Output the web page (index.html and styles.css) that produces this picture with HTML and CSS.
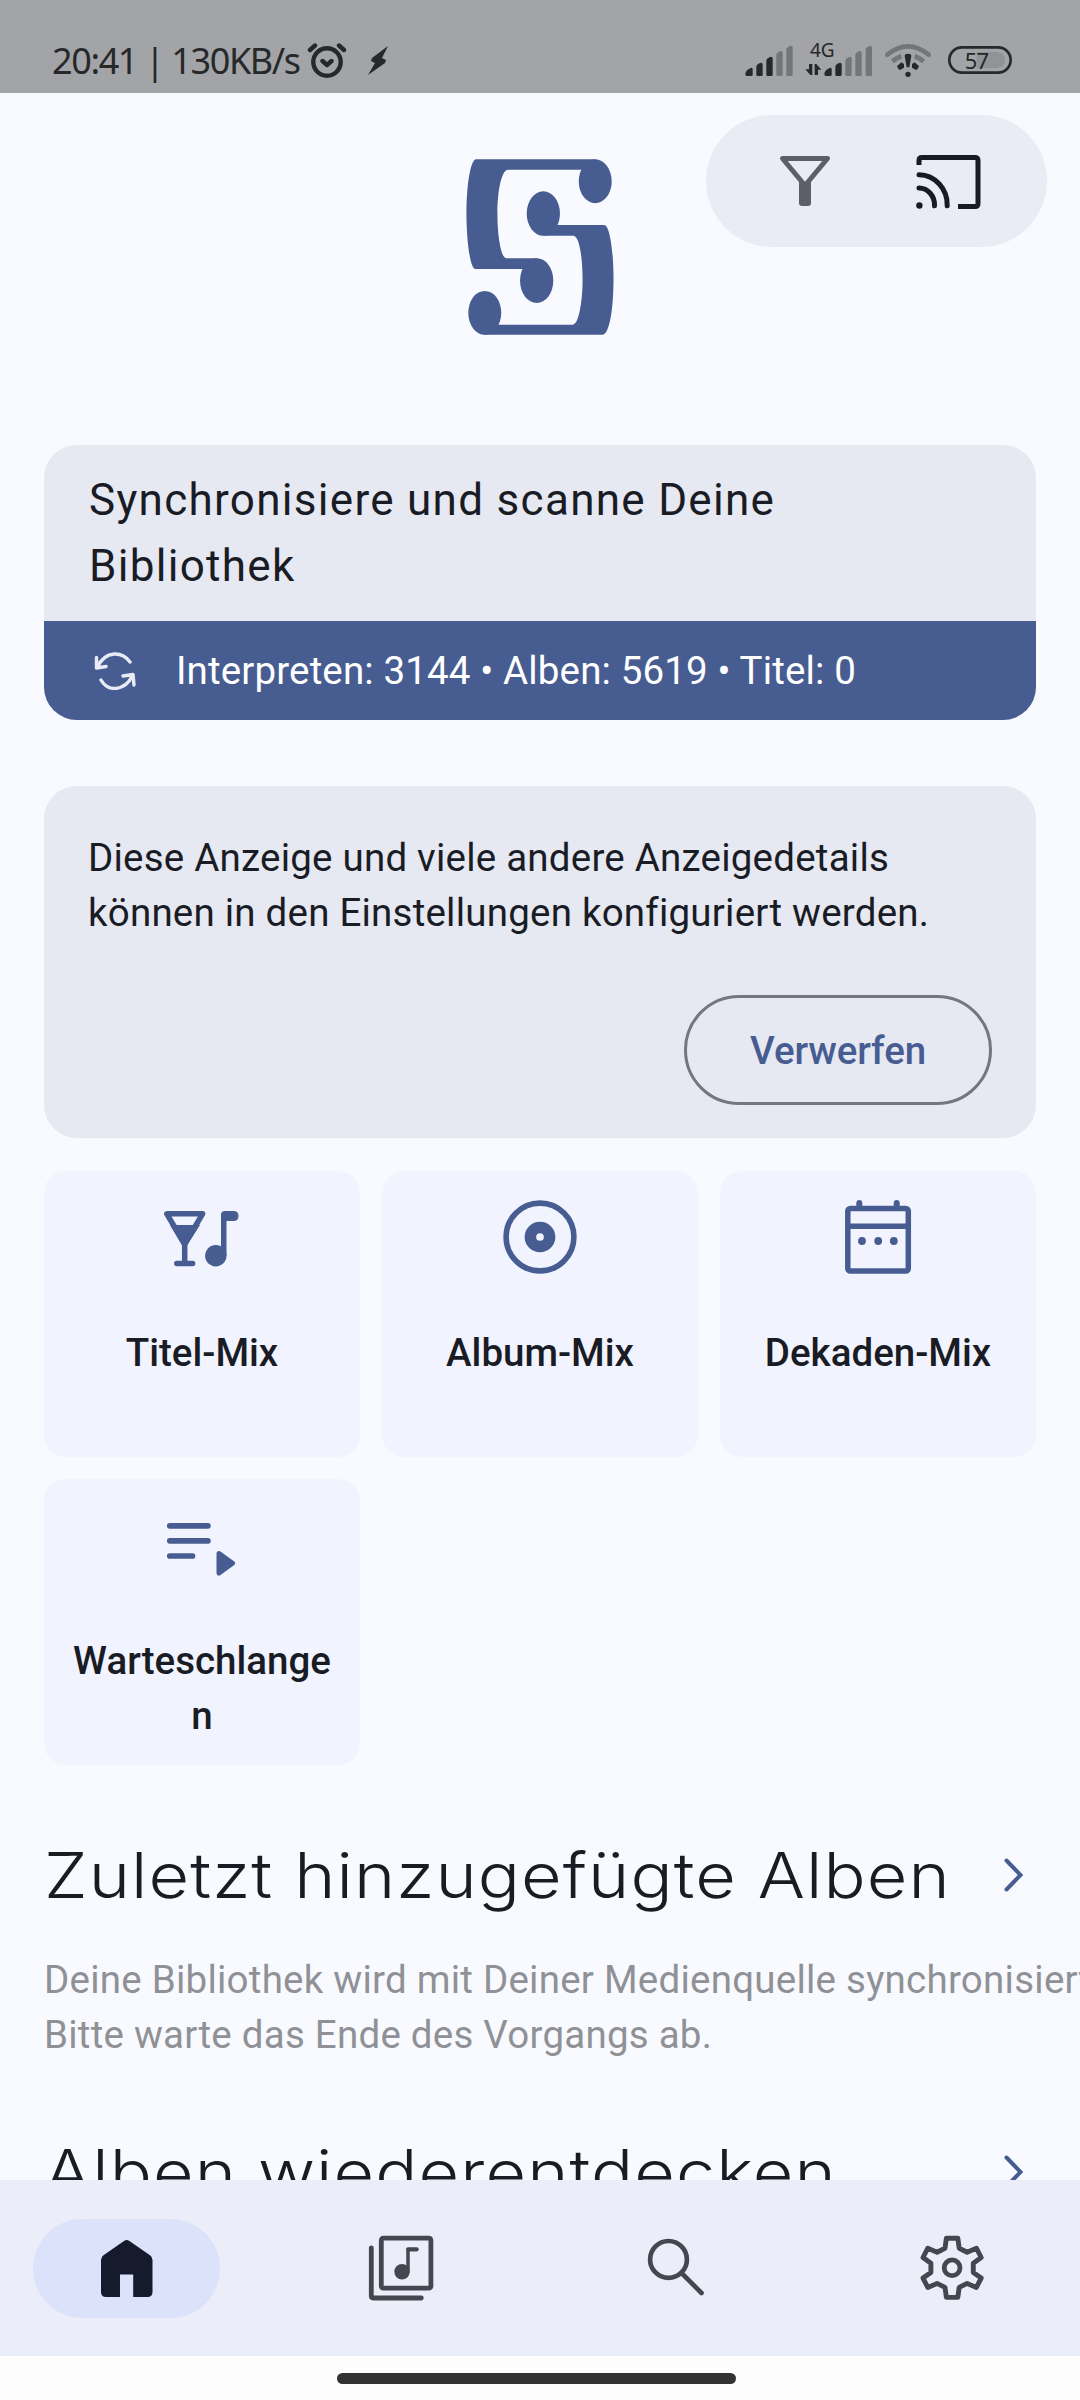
FILE: index.html
```html
<!DOCTYPE html>
<html lang="de">
<head>
<meta charset="utf-8">
<title>Startseite</title>
<link rel="stylesheet" href="styles.css">
</head>
<body>
<div class="screen">
  <div class="status-bar">
    <div class="status-left">
      <span class="status-text">20:41 | 130KB/s</span>
      <svg class="alarm" viewBox="0 0 40 36" fill="none" stroke="#262829" stroke-width="4.4" stroke-linecap="round" stroke-linejoin="round">
        <circle cx="20" cy="20" r="13.7"/><path d="M15.5 19l4.500 4 4.500-4M3 8l5-4.500M37 8l-5-4.500"/>
      </svg>
      <svg class="bolt" viewBox="0 0 20 29"><path fill="#262829" d="M20 0L4 12l-1 3 4 2L0 29l17-12 1-3-4-2z"/></svg>
    </div>
    <svg class="status-right" viewBox="0 0 1140 279">
      <g fill="#262829">
        <path d="M136 222q0-12 18-19q4 0 4 4v17q0 4-4 4h-14q-4 0-4-6zM169 200q0-8 14-12q5 0 5 5v31q0 4-4 4h-11q-4 0-4-4zM199 182q0-8 14-12q5 0 5 5v49q0 4-4 4h-11q-4 0-4-4z"/>
        <path d="M373 222q0-12 18-19q4 0 4 4v17q0 4-4 4h-14q-4 0-4-6zM406 200q0-8 14-12q5 0 5 5v31q0 4-4 4h-11q-4 0-4-4z"/>
        <path d="M327 192h10v33h-6l-15-17h11zM344 192h5l15 17h-10v16h-10z"/>
        <path d="M614 168q0-7 10-7t10 7l-6 34h-8z"/><circle cx="624" cy="223" r="8"/>
        <path d="M591 199l13-12 8 5v11l-12 7q-6-2-9-11zM657 199l-13-12-8 5v11l12 7q6-2 9-11z"/>
      </g>
      <g fill="#737579">
        <path d="M229 165q0-8 14-12q5 0 5 5v66q0 4-4 4h-11q-4 0-4-4zM259 149q0-8 14-12q5 0 5 5v82q0 4-4 4h-11q-4 0-4-4z"/>
        <path d="M436 182q0-8 14-12q5 0 5 5v49q0 4-4 4h-11q-4 0-4-4zM466 165q0-8 14-12q5 0 5 5v66q0 4-4 4h-11q-4 0-4-4zM497 149q0-8 14-12q5 0 5 5v82q0 4-4 4h-11q-4 0-4-4z"/>
      </g>
      <g fill="none" stroke="#737579" stroke-width="14">
        <path stroke-linecap="round" d="M562 164Q624 114 686 164"/><path d="M577 184q12-10 27-15M671 184q-12-10-27-15"/>
      </g>
      <path fill="#929397" d="M830 156h60q25 2 25 24t-25 24h-60z"/>
      <rect x="748" y="142" width="184" height="76" rx="38" fill="none" stroke="#262829" stroke-width="8"/>
      <text class="net-label" x="330" y="170">4G</text>
      <text class="battery-label" x="794" y="206">57</text>
    </svg>
  </div>

  <main class="content">
    <header class="hero">
      <svg class="logo" viewBox="78 86 444 529" fill="#475d92">
        <path d="M108 87H466V118H204C185 118 172 180 172 251C172 322 184 384 198 384H292V417H106C90 417 79 330 79 252C79 160 92 87 108 87Z"/>
        <path d="M310 284H493C509 284 521 360 521 445C521 540 508 614 488 614H133V584H399C415 584 428 520 428 450C428 380 418 317 400 317H310Z"/>
        <ellipse cx="466" cy="153" rx="49.500" ry="66"/><ellipse cx="290" cy="451.500" rx="50" ry="67.500"/>
        <ellipse cx="310" cy="250" rx="50" ry="67"/><ellipse cx="134" cy="548.500" rx="49.500" ry="66"/>
      </svg>
      <div class="toolbar">
        <svg class="tool-icon" viewBox="0 0 72 72" fill="none" stroke="#5c5f67" stroke-width="5" stroke-linejoin="round"><path d="M13.500 13.500h45L36 40.500z"/><path fill="#5c5f67" stroke="none" d="M30 37l6 2 6-2v21q0 3-3 3h-6q-3 0-3-3z"/></svg>
        <svg class="tool-icon" viewBox="0 0 72 72" fill="none" stroke="#161b26" stroke-width="5"><path d="M6 20v-4.500q0-3 3-3h53q3 0 3 3v43q0 3-3 3H45"/><path stroke-linecap="round" d="M6 29.800A28.500 30 0 0 1 34.200 60.800M6 43A15.500 17 0 0 1 21.500 60.800"/><circle cx="6.400" cy="60.500" r="3.200" fill="#161b26" stroke="none"/></svg>
      </div>
    </header>

    <section class="sync-card">
      <p class="sync-title">Synchronisiere und scanne Deine Bibliothek</p>
      <div class="sync-status">
        <svg class="sync-icon" viewBox="0 0 42 38" fill="none" stroke="#e8ebf5" stroke-width="3.400" stroke-linecap="round" stroke-linejoin="round"><path d="M2.500 5.500v10.500l9.500-1.500M3.500 15Q9 3 20 2Q30 1.500 36 10M40 33l-1-10.500-10 1.500M38.500 23.500Q33 35 22 36.500Q12 37 7 28"/></svg>
        <span>Interpreten: 3144 • Alben: 5619 • Titel: 0</span>
      </div>
    </section>

    <section class="hint-card">
      <p>Diese Anzeige und viele andere Anzeigedetails können in den Einstellungen konfiguriert werden.</p>
      <button class="dismiss" type="button">Verwerfen</button>
    </section>

    <section class="tiles">
      <div class="tile">
        <svg viewBox="0 0 88 88" fill="none" stroke="#475d92" stroke-width="5.500" stroke-linecap="round" stroke-linejoin="round"><path d="M8.800 20.800H44.600L26.700 51z"/><path d="M26.700 50V70.500M18.800 70.500H34.600"/><path fill="#475d92" stroke="none" d="M12 32H42L28 54h-3zM63 60V22q0-4 4-4h8.500q5 0 5 5t-5 5h-7V63z"/><circle cx="57.800" cy="62.700" r="10.700" fill="#475d92" stroke="none"/></svg>
        <span>Titel-Mix</span>
      </div>
      <div class="tile">
        <svg viewBox="0 0 88 88" fill="none" stroke="#475d92"><circle cx="44" cy="44" r="33.900" stroke-width="5.600"/><circle cx="44" cy="44" r="9.600" stroke-width="11.500"/></svg>
        <span>Album-Mix</span>
      </div>
      <div class="tile">
        <svg viewBox="0 0 88 88" fill="none" stroke="#475d92" stroke-width="5.500"><rect x="13.800" y="15.500" width="60.500" height="62.500" rx="2.500"/><path d="M14 33.200H74"/><path stroke-linecap="round" stroke-width="6" d="M25.300 10v4M62.700 10v4"/><g fill="#475d92" stroke="none"><circle cx="28" cy="48" r="3.900"/><circle cx="44.200" cy="48" r="3.900"/><circle cx="59.800" cy="48" r="3.900"/></g></svg>
        <span>Dekaden-Mix</span>
      </div>
      <div class="tile">
        <svg viewBox="0 0 88 88" fill="none" stroke="#475d92" stroke-width="5.700" stroke-linecap="round" stroke-linejoin="round"><path d="M11.800 24.800H49.900M11.800 39.800H49.900M11.800 55H34.500"/><path fill="#475d92" stroke-width="5" d="M61 52.500L74.500 62.200L61 72z"/></svg>
        <span>Warteschlangen</span>
      </div>
    </section>

    <section class="row-section">
      <div class="row-head"><h2>Zuletzt hinzugefügte Alben</h2><svg class="chevron" viewBox="0 0 20 34"><path d="M2.500 2.500L16.500 17L2.500 31.500"/></svg></div>
      <p class="row-note">Deine Bibliothek wird mit Deiner Medienquelle synchronisiert.<br>Bitte warte das Ende des Vorgangs ab.</p>
    </section>
    <section class="row-section">
      <div class="row-head"><h2>Alben wiederentdecken</h2><svg class="chevron" viewBox="0 0 20 34"><path d="M2.500 2.500L16.500 17L2.500 31.500"/></svg></div>
    </section>
  </main>

  <nav class="nav">
    <a class="nav-item active"><svg viewBox="0 0 72 72"><path fill="#151b2c" d="M10 28q0-3 2.500-4.800L33 9q2.700-2 5.400 0L59 23.200q2.500 1.800 2.500 4.800V60q0 5-5 5H42.200V42.500H29V65H15q-5 0-5-5z"/></svg></a>
    <a class="nav-item"><svg viewBox="0 0 72 72" fill="none" stroke="#444750" stroke-width="4.800" stroke-linecap="round" stroke-linejoin="round"><rect x="15.300" y="6.200" width="49.600" height="50" rx="2"/><path d="M5.300 15.800V64q0 2 2 2H55.300"/><path stroke-width="3.500" d="M42 40V17.200"/><path stroke-width="4.200" d="M42.300 17.300H50.700"/><circle cx="36" cy="39.800" r="7.700" fill="#444750" stroke="none"/></svg></a>
    <a class="nav-item"><svg viewBox="0 0 72 72" fill="none" stroke="#444750" stroke-width="4.700" stroke-linecap="round"><circle cx="26.500" cy="27.400" r="18.400"/><path d="M40 41.500L59.500 61"/></svg></a>
    <a class="nav-item"><svg viewBox="0 0 72 72" fill="none" stroke="#444750" stroke-width="4.800" stroke-linejoin="round"><path stroke-width="4.900" d="M29.400 6.200H40.800L42.200 16.200L50.100 20.200L59.400 16.200L64.200 25.500L56.300 31.200V40.400L64.200 46.100L59.400 55.400L50.100 51.400L42.200 55.400L40.800 65.400H29.400L28 55.400L20.100 51.400L10.800 55.400L6 46.100L13.900 40.400V31.200L6 25.500L10.800 16.200L20.100 20.200L28 16.200z"/><circle cx="35.100" cy="35.800" r="7.900"/></svg></a>
  </nav>
  <div class="gesture-area"><div class="gesture-bar"></div></div>
</div>
</body>
</html>
```
FILE: styles.css
```css
* { box-sizing: border-box; }
body { margin: 0; font-family: Roboto, "Liberation Sans", sans-serif; color: #191c24; }
p, h2 { margin: 0; }
svg { display: block; flex: none; }
.screen { width: 1080px; height: 2400px; display: flex; flex-direction: column; overflow: hidden; background: #f9faff; }

.status-bar { height: 93px; flex: none; display: flex; justify-content: space-between; background: #a3a4a8; }
.status-left { display: flex; padding-left: 52px; }
.status-text { width: 255px; font: 36px/50px "Noto Sans", sans-serif; letter-spacing: -1.4px; padding-top: 36px; color: #262829; white-space: nowrap; }
.alarm { width: 40px; height: 36px; margin-top: 42px; }
.bolt { width: 20px; height: 29px; margin: 46px 0 0 21px; }
.status-right { width: 380px; height: 93px; }
.net-label { font: 57px "Noto Sans", sans-serif; fill: #262829; }
.battery-label { font: 66px "Noto Sans", sans-serif; letter-spacing: -2px; fill: #262829; }

.content { height: 2087px; flex: none; overflow: hidden; padding: 0 44px; }
.hero { position: relative; height: 352px; display: flex; justify-content: center; padding-top: 66px; }
.logo { width: 148px; height: 176px; }
.toolbar { position: absolute; top: 22px; right: -11px; width: 341px; height: 132px; border-radius: 66px; background: #e9ecf5; display: flex; align-items: center; gap: 72px; padding-left: 63px; }
.tool-icon { width: 72px; height: 72px; }

.sync-card { border-radius: 33px; overflow: hidden; background: #e6e8f2; height: 275px; }
.sync-title { padding: 22px 44px 22px 45px; font-size: 44px; line-height: 66px; letter-spacing: 1.3px; }
.sync-status { height: 99px; padding: 0 50px; display: flex; align-items: center; gap: 40px; background: #475d92; color: #fff; font-size: 38.5px; line-height: 55px; letter-spacing: 0.14px; white-space: nowrap; }
.sync-icon { width: 42px; height: 38px; }

.hint-card { margin-top: 66px; height: 352px; border-radius: 33px; background: #e6e8f2; padding: 44px 44px 33px; display: flex; flex-direction: column; justify-content: space-between; font-size: 38.5px; line-height: 55px; letter-spacing: 0.22px; }
.dismiss { align-self: flex-end; width: 308px; height: 110px; border: 3px solid #74777f; border-radius: 55px; background: none; padding: 0; color: #475d92; font: 500 38.5px/55px Roboto, sans-serif; letter-spacing: -0.1px; }

.tiles { margin-top: 33px; display: grid; grid-template-columns: repeat(3, 1fr); gap: 22px; }
.tile { height: 286px; border-radius: 22px; background: #f1f3ff; padding: 22px; display: flex; flex-direction: column; align-items: center; gap: 44px; }
.tile svg { width: 88px; height: 88px; }
.tile span { max-width: 100%; text-align: center; overflow-wrap: anywhere; font-size: 38.5px; font-weight: 500; line-height: 55px; }

.row-section { height: 297px; padding-top: 66px; }
.row-head { height: 88px; display: flex; align-items: center; justify-content: space-between; padding-right: 12px; }
.row-head h2 { font: 300 63px/88px Inter, sans-serif; letter-spacing: 1px; white-space: nowrap; transform: scaleX(1.112); transform-origin: left; }
.chevron { width: 20px; height: 34px; fill: none; stroke: #475d92; stroke-width: 4; stroke-linecap: round; }
.row-note { margin-top: 33px; font-size: 38.5px; line-height: 55px; letter-spacing: 0.24px; color: #8f9196; white-space: nowrap; }

.nav { height: 176px; flex: none; display: grid; grid-template-columns: repeat(4, 1fr); gap: 22px; align-items: center; justify-items: center; background: #ebedf8; }
.nav-item { width: 187px; height: 99px; border-radius: 50px; display: flex; align-items: center; justify-content: center; }
.nav-item.active { background: #dce2fa; }
.nav-item svg { width: 72px; height: 72px; }
.gesture-area { flex: 1; background: #fdfdfe; padding: 17px 0 0 337px; }
.gesture-bar { width: 399px; height: 11px; border-radius: 6px; background: #323232; }
```
